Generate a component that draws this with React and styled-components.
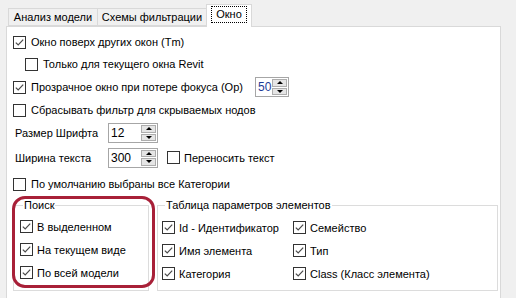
import React from 'react';
import styled, { createGlobalStyle } from 'styled-components';

const GlobalStyle = createGlobalStyle`
    html, body {
        margin: 0;
        padding: 0;
        background: #f0f0f0;
    }
    body {
        font-family: "Liberation Sans", Arial, sans-serif;
        font-size: 11px;
        color: #000;
    }
`;

const Frame = styled.div`
    width: 516px;
    height: 298px;
    overflow: hidden;
    padding-left: 6px;
    box-sizing: border-box;
    background: #f0f0f0;
`;

const TabBar = styled.div`
    display: flex;
    align-items: flex-end;
    height: 26px;
    padding-left: 2px;
    position: relative;
    z-index: 1;
`;

const Tab = styled.div`
    box-sizing: border-box;
    display: flex;
    align-items: center;
    justify-content: center;
    width: ${p => p.$w}px;
    height: ${p => (p.$active ? 23 : 18)}px;
    margin-left: ${p => (p.$first ? 0 : -1)}px;
    margin-bottom: ${p => (p.$active ? -1 : 0)}px;
    border: 1px solid #d9d9d9;
    border-bottom: ${p => (p.$active ? 'none' : '1px solid #d9d9d9')};
    background: ${p => (p.$active ? '#fff' : '#f0f0f0')};
    padding-bottom: ${p => (p.$active ? 3 : 0)}px;
`;

const Focus = styled.span`
    outline: 1px dotted #000;
    outline-offset: 1px;
    padding: 0 3px;
    line-height: 13px;
`;

const Panel = styled.div`
    box-sizing: border-box;
    width: 495px;
    height: 290px;
    border: 1px solid #d9d9d9;
    background: #fff;
    padding: 4px 0 0 6px;
`;

const Row = styled.div`
    display: flex;
    align-items: center;
    height: ${p => p.$h}px;
    padding-left: ${p => p.$indent || 0}px;
`;

const Check = styled.label`
    display: flex;
    align-items: center;
    gap: ${p => p.$gap || 5}px;
    white-space: nowrap;
`;

const Box = styled.span`
    box-sizing: border-box;
    flex: none;
    width: 13px;
    height: 13px;
    border: 1px solid #333;
    background: #fff;
    display: flex;
`;

const CheckLabel = styled.span`
    display: inline-block;
    width: ${p => (p.$w ? `${p.$w}px` : 'auto')};
`;

const FieldLabel = styled.span`
    width: ${p => p.$w}px;
    padding-left: 2px;
    box-sizing: border-box;
`;

const Spin = styled.div`
    box-sizing: border-box;
    display: flex;
    width: ${p => p.$w}px;
    height: 20px;
    border: 1px solid #a6a6a6;
    background: #fff;
    margin-right: ${p => p.$mr || 0}px;
`;

const SpinValue = styled.span`
    flex: 1;
    padding-left: 2px;
    line-height: 18px;
    color: ${p => p.$color || '#000'};
    font-size: 12px;
`;

const SpinButtons = styled.div`
    display: flex;
    flex-direction: column;
    width: 15px;
    padding: 1px 1px 1px 0;
    gap: 1px;
`;

const SpinBtn = styled.div`
    flex: 1;
    background: #e5e5e5;
    border: 1px solid #adadad;
    display: flex;
    align-items: center;
    justify-content: center;
    &::after {
        content: '';
        width: 0;
        height: 0;
        border-left: 3px solid transparent;
        border-right: 3px solid transparent;
        ${p => (p.$down ? 'border-top: 3px solid #000;' : 'border-bottom: 3px solid #000;')}
    }
`;

const Groups = styled.div`
    display: flex;
    gap: 8px;
    margin-top: 1px;
`;

const GroupWrap = styled.div`
    position: relative;
    display: flex;
`;

const Group = styled.fieldset`
    box-sizing: border-box;
    margin: 0;
    width: ${p => p.$w}px;
    height: 92px;
    border: 1px solid #dcdcdc;
    padding: ${p => p.$pt}px 0 0 ${p => p.$pl}px;
    min-width: 0;
`;

const Legend = styled.legend`
    padding: 0 1px;
    margin-left: ${p => p.$ml}px;
    line-height: 13px;
`;

const Grid = styled.div`
    display: grid;
    grid-template-columns: 131px auto;
    grid-auto-rows: 23px;
    align-items: center;
`;

const GroupList = styled.div`
    display: flex;
    flex-direction: column;
`;

const Highlight = styled.div`
    position: absolute;
    left: -1px;
    top: -3px;
    width: 143px;
    height: 92px;
    box-sizing: border-box;
    border: 3px solid #a82038;
    border-radius: 13px;
    pointer-events: none;
`;

const CheckBox = ({ checked, children, gap, w }) => (
    <Check $gap={gap}>
        <Box>
            {checked && (
                <svg width="11" height="11" viewBox="0 0 11 11">
                    <polyline points="1.8,5.6 4.2,8 9.2,2.6" fill="none" stroke="#4a4a4a" strokeWidth="1.2" />
                </svg>
            )}
        </Box>
        <CheckLabel $w={w}>{children}</CheckLabel>
    </Check>
);

const NumberBox = ({ value, w, color, mr }) => (
    <Spin $w={w} $mr={mr}>
        <SpinValue $color={color}>{value}</SpinValue>
        <SpinButtons>
            <SpinBtn />
            <SpinBtn $down />
        </SpinButtons>
    </Spin>
);

const search = ['В выделенном', 'На текущем виде', 'По всей модели'];
const params = [
    ['Id - Идентификатор', 'Семейство'],
    ['Имя элемента', 'Тип'],
    ['Категория', 'Class (Класс элемента)'],
];

const App = () => (
    <Frame>
        <GlobalStyle />
        <TabBar>
            <Tab $w={90} $first>Анализ модели</Tab>
            <Tab $w={110}>Схемы фильтрации</Tab>
            <Tab $w={46} $active><Focus>Окно</Focus></Tab>
        </TabBar>
        <Panel>
            <Row $h={22}><CheckBox checked>Окно поверх других окон (Tm)</CheckBox></Row>
            <Row $h={22} $indent={12}><CheckBox>Только для текущего окна Revit</CheckBox></Row>
            <Row $h={24}>
                <CheckBox checked w={224}>Прозрачное окно при потере фокуса (Op)</CheckBox>
                <NumberBox value="50" w={34} color="#1e3c96" />
            </Row>
            <Row $h={22}><CheckBox>Сбрасывать фильтр для скрываемых нодов</CheckBox></Row>
            <Row $h={24}>
                <FieldLabel $w={95}>Размер Шрифта</FieldLabel>
                <NumberBox value="12" w={50} />
            </Row>
            <Row $h={25}>
                <FieldLabel $w={95}>Ширина текста</FieldLabel>
                <NumberBox value="300" w={50} mr={9} />
                <CheckBox gap={4}>Переносить текст</CheckBox>
            </Row>
            <Row $h={28}><CheckBox>По умолчанию выбраны все Категории</CheckBox></Row>
            <Groups>
                <GroupWrap>
                    <Group $w={136} $pt={3} $pl={6}>
                        <Legend $ml={3}>Поиск</Legend>
                        <GroupList>
                            {search.map(s => (
                                <Row $h={23} key={s}><CheckBox checked gap={4}>{s}</CheckBox></Row>
                            ))}
                        </GroupList>
                    </Group>
                    <Highlight />
                </GroupWrap>
                <Group $w={341} $pt={4} $pl={4}>
                    <Legend $ml={3}>Таблица параметров элементов</Legend>
                    <Grid>
                        {params.flat().map(p => (
                            <CheckBox checked gap={4} key={p}>{p}</CheckBox>
                        ))}
                    </Grid>
                </Group>
            </Groups>
        </Panel>
    </Frame>
);

export default App;
